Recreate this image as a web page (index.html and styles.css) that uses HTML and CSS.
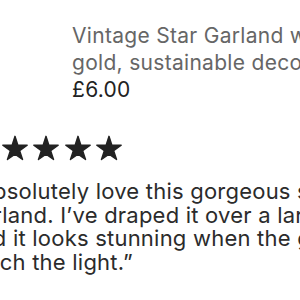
FILE: index.html
```html
<!DOCTYPE html>
<html lang="en">
<head>
    <meta charset="UTF-8">
    <meta name="viewport" content="width=device-width, initial-scale=1.0">
    <title>Review</title>
    <link rel="stylesheet" href="styles.css">
</head>
<body>
    <main class="review">
        <div class="product">
            <p class="product-title">Vintage Star Garland with<br>gold, sustainable decoration</p>
            <p class="product-price">£6.00</p>
        </div>
        <div class="stars" aria-label="5 stars">
            <svg class="star" viewBox="-1 -1 24 22"><path d="M11 0L13.47 7.6 21.46 7.6 14.99 12.3 17.47 19.9 11 15.2 4.53 19.9 7.01 12.3 0.54 7.6 8.53 7.6Z"/></svg>
            <svg class="star" viewBox="-1 -1 24 22"><path d="M11 0L13.47 7.6 21.46 7.6 14.99 12.3 17.47 19.9 11 15.2 4.53 19.9 7.01 12.3 0.54 7.6 8.53 7.6Z"/></svg>
            <svg class="star" viewBox="-1 -1 24 22"><path d="M11 0L13.47 7.6 21.46 7.6 14.99 12.3 17.47 19.9 11 15.2 4.53 19.9 7.01 12.3 0.54 7.6 8.53 7.6Z"/></svg>
            <svg class="star" viewBox="-1 -1 24 22"><path d="M11 0L13.47 7.6 21.46 7.6 14.99 12.3 17.47 19.9 11 15.2 4.53 19.9 7.01 12.3 0.54 7.6 8.53 7.6Z"/></svg>
            <svg class="star" viewBox="-1 -1 24 22"><path d="M11 0L13.47 7.6 21.46 7.6 14.99 12.3 17.47 19.9 11 15.2 4.53 19.9 7.01 12.3 0.54 7.6 8.53 7.6Z"/></svg>
        </div>
        <p class="quote"><span class="open-quote">“</span>I absolutely love this gorgeous star<br>garland. I’ve draped it over a large mirror<br>and it looks stunning when the gold stars<br>catch the light.”</p>
    </main>
</body>
</html>
```

FILE: styles.css
```css
html, body {
    margin: 0;
    padding: 0;
    background: #fff;
    overflow: hidden;
}
body {
    font-family: Inter, 'Noto Sans', sans-serif;
    color: #222;
    width: 300px;
    height: 300px;
}
.review {
    margin-left: -30px;
    padding-top: 22px;
    white-space: nowrap;
}
.product {
    padding-left: 102px;
}
.product-title, .product-price {
    margin: 0;
    font-size: 21px;
    line-height: 27px;
    letter-spacing: 0.3px;
}
.product-title {
    color: #666;
}
.product-price {
    color: #222;
}
.stars {
    display: flex;
    gap: 3.5px;
    margin: 32px 0 0 -1px;
}
.star {
    width: 28px;
    height: 26px;
    fill: #222;
    stroke: #222;
    stroke-width: 1.2;
    stroke-linejoin: round;
}
.quote {
    margin: 19px 0 0 -3px;
    font-size: 22px;
    line-height: 23.5px;
    letter-spacing: 0.22px;
    color: #2b2b2b;
}
.open-quote {
    margin-left: -9px;
}
```
